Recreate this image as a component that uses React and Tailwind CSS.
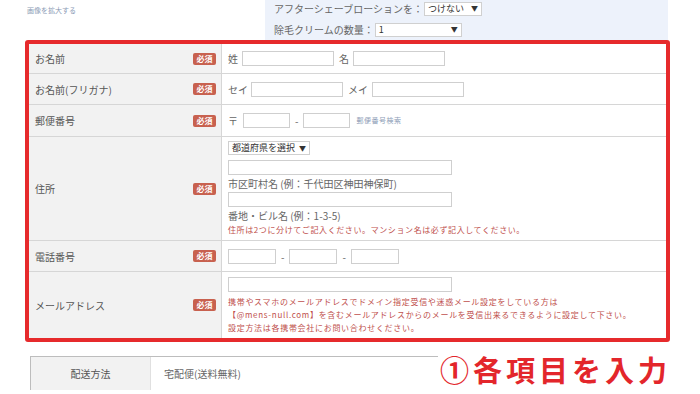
const font = { fontFamily: '"Noto Sans CJK JP", "Noto Sans", sans-serif' }

function Badge() {
  return (
    <span className="flex h-[12px] w-[23px] items-center justify-center rounded-[2px] bg-[#c8614f] text-[8px] font-bold leading-none text-white">
      必須
    </span>
  )
}

function Input({ w }) {
  return <span className={`block h-[15px] border border-[#cfcfcf] bg-white ${w}`} />
}

function Row({ label, h, children, last }) {
  return (
    <div className={`flex ${h} ${last ? '' : 'border-b border-[#d6d6d6]'}`}>
      <div className="flex w-[193px] shrink-0 items-center justify-between border-r border-[#d6d6d6] bg-[#f2f2f2] pl-[6px] pr-[5px] text-[10px] text-[#555]">
        <span>{label}</span>
        <Badge />
      </div>
      <div className="flex flex-1 flex-col justify-center pl-[6px] text-[10px] text-[#666]">{children}</div>
    </div>
  )
}

export default function App() {
  return (
    <div className="relative h-[394px] w-[700px] overflow-hidden bg-white" style={font}>
      <div className="flex h-[40px]">
        <div className="w-[265px] pl-[27px] pt-[5px] text-[7px] text-[#8c9cb6]">画像を拡大する</div>
        <div className="flex w-[403px] flex-col gap-[6px] bg-[#edf2fb] pl-[9px] pt-[1px] text-[10px] text-[#666]">
          <div className="flex items-center">
            <span>アフターシェーブローションを：</span>
            <span className="ml-[1px] flex h-[14px] w-[58px] items-center justify-between border border-[#d0d0d0] bg-white px-[3px] text-[9px] text-[#333]">
              つけない<span className="text-[7px]">▼</span>
            </span>
          </div>
          <div className="flex items-center">
            <span>除毛クリームの数量：</span>
            <span className="ml-[1px] flex h-[14px] w-[87px] items-center justify-between border border-[#d0d0d0] bg-white px-[3px] text-[9px] text-[#333]">
              1<span className="text-[7px]">▼</span>
            </span>
          </div>
        </div>
      </div>

      <div className="ml-[25px] w-[645px] rounded-[3px] border-4 border-[#e62a2c]">
        <Row label="お名前" h="h-[30px]">
          <div className="flex items-center gap-[3px]">
            <span>姓</span>
            <Input w="w-[92px] ml-[1px]" />
            <span className="ml-[2px]">名</span>
            <Input w="w-[92px] ml-[1px]" />
          </div>
        </Row>
        <Row label="お名前(フリガナ)" h="h-[31px]">
          <div className="flex items-center gap-[3px]">
            <span>セイ</span>
            <Input w="w-[92px]" />
            <span className="ml-[2px]">メイ</span>
            <Input w="w-[92px] ml-[1px]" />
          </div>
        </Row>
        <Row label="郵便番号" h="h-[32px]">
          <div className="flex items-center gap-[5px]">
            <span>〒</span>
            <Input w="w-[47px]" />
            <span>-</span>
            <Input w="w-[47px]" />
            <span className="ml-[1px] text-[7px] tracking-[0.5px] text-[#8c9cb6]">郵便番号検索</span>
          </div>
        </Row>
        <Row label="住所" h="h-[104px]">
          <div className="flex flex-col items-start">
            <span className="flex h-[14px] items-center gap-[4px] border border-[#d0d0d0] bg-white px-[3px] text-[9px] text-[#333]">
              都道府県を選択<span className="text-[7px]">▼</span>
            </span>
            <Input w="w-[224px] mt-[5px]" />
            <span className="mt-[1px] leading-[15px]">市区町村名 (例：千代田区神田神保町)</span>
            <Input w="w-[224px] mt-[1px]" />
            <span className="mt-[1px] leading-[15px]">番地・ビル名 (例：1-3-5)</span>
            <span className="mt-[1px] text-[8px] leading-[12px] tracking-[0.6px] text-[#c0504d]">
              住所は2つに分けてご記入ください。マンション名は必ず記入してください。
            </span>
          </div>
        </Row>
        <Row label="電話番号" h="h-[31px]">
          <div className="flex items-center gap-[5px]">
            <Input w="w-[48px]" />
            <span>-</span>
            <Input w="w-[48px]" />
            <span>-</span>
            <Input w="w-[48px]" />
          </div>
        </Row>
        <Row label="メールアドレス" h="h-[66px]" last>
          <div className="flex flex-col items-start">
            <Input w="w-[224px]" />
            <div className="mt-[3px] text-[8px] leading-[13px] tracking-[0.7px] text-[#c0504d]">
              <div>携帯やスマホのメールアドレスでドメイン指定受信や迷惑メール設定をしている方は</div>
              <div>【@mens-null.com】を含むメールアドレスからのメールを受信出来るできるように設定して下さい。</div>
              <div>設定方法は各携帯会社にお問い合わせください。</div>
            </div>
          </div>
        </Row>
      </div>

      <div className="ml-[30px] mt-[14px] flex h-[34px] w-[640px] border-l border-t border-[#bdbdbd]">
        <div className="flex w-[120px] items-center justify-center border-r border-[#e0e0e0] bg-[#f2f2f2] text-[10px] text-[#555]">
          配送方法
        </div>
        <div className="flex flex-1 items-center pl-[13px] text-[10px] text-[#666]">宅配便(送料無料)</div>
      </div>

      <div className="absolute left-[438px] top-[352px] bg-white pl-[2px] pr-[2px] text-[29px] font-bold leading-[34px] tracking-[4px] text-[#e3262b]">
        ①各項目を入力
      </div>
    </div>
  )
}
